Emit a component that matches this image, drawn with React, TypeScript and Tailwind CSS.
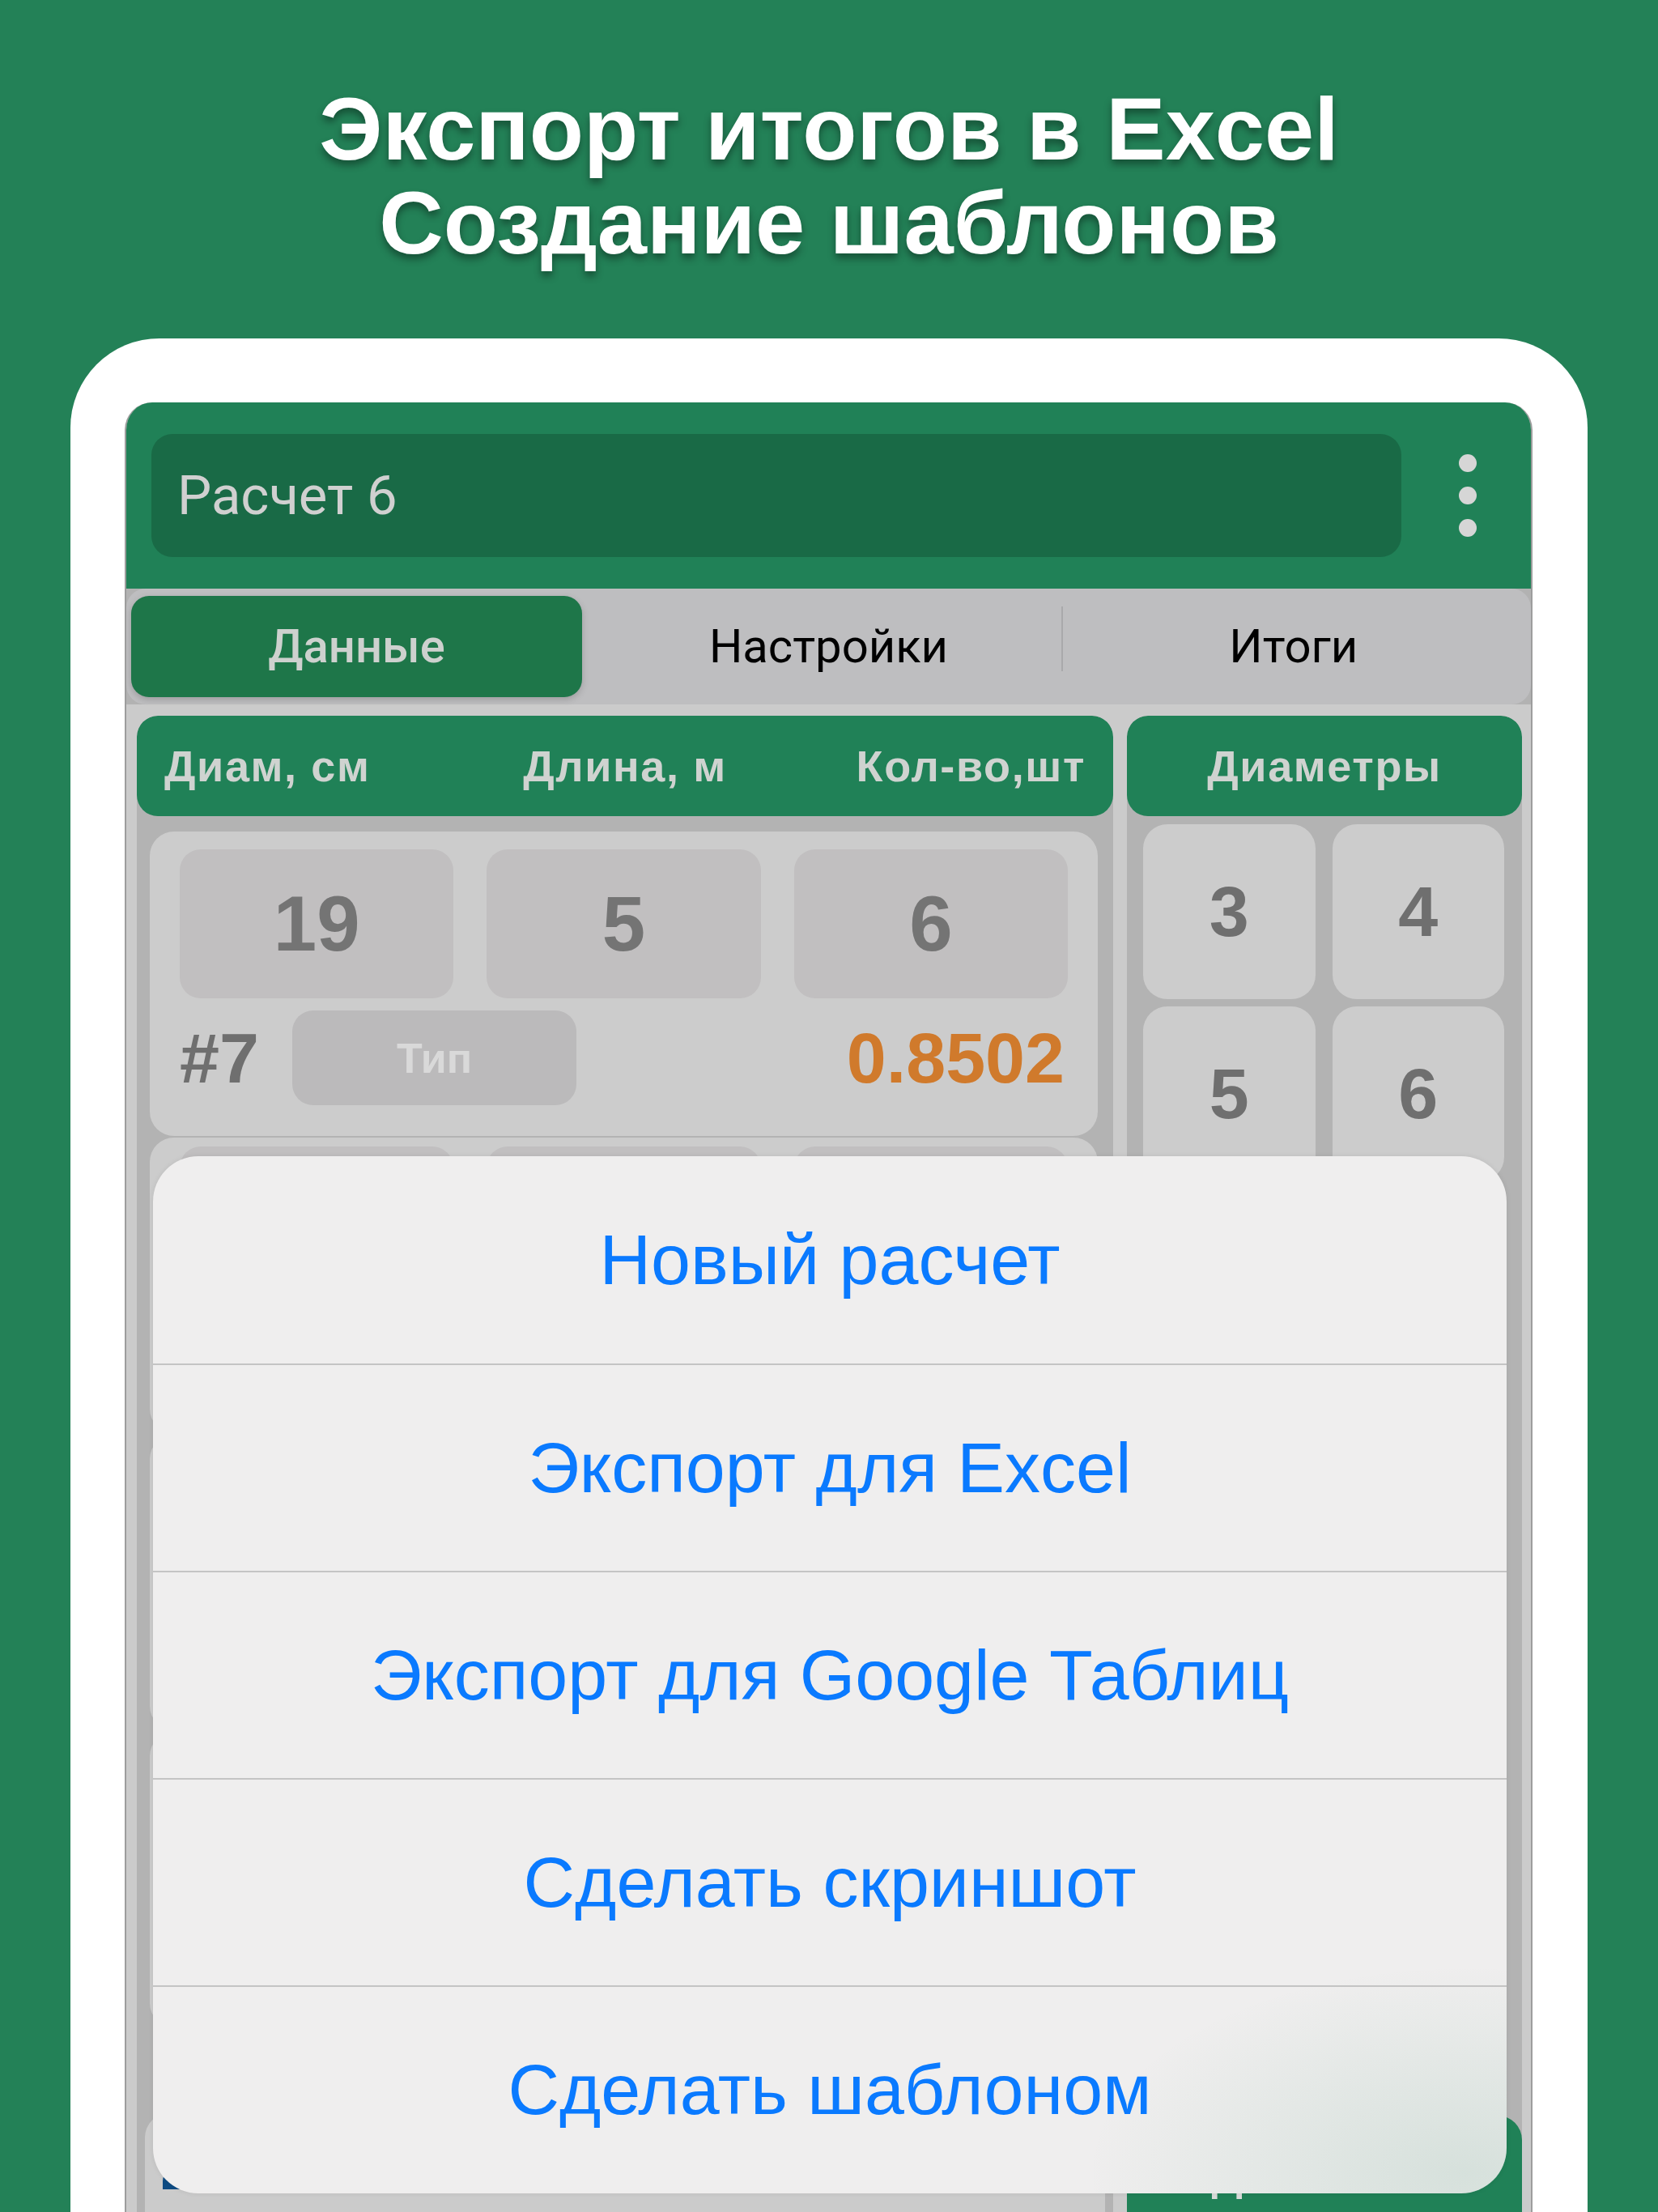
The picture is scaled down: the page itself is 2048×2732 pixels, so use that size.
import React from 'react';

const rows = [
  { d: '19', l: '5', n: '6', idx: '#7', v: '0.8502' },
  { d: '', l: '', n: '', idx: '', v: '' },
  { d: '', l: '', n: '', idx: '', v: '' },
  { d: '', l: '', n: '', idx: '', v: '' },
];

const diameters = ['3', '4', '5', '6', '', '', '', '', '', ''];

const menu = [
  'Новый расчет',
  'Экспорт для Excel',
  'Экспорт для Google Таблиц',
  'Сделать скриншот',
  'Сделать шаблоном',
];

const sans = "font-['Liberation_Sans',Arial,sans-serif]";
const roboto = "font-['Roboto','Liberation_Sans',sans-serif]";

export default function App() {
  return (
    <div className="w-[2048px] h-[2732px] overflow-hidden bg-[#238157] flex flex-col items-center">
      {/* Promo title */}
      <div
        className={`pt-[101px] text-center text-white font-bold text-[110px] leading-[116px] ${sans} [text-shadow:0_6px_10px_rgba(0,0,0,0.38)]`}
      >
        <div>Экспорт итогов в Excel</div>
        <div>Создание шаблонов</div>
      </div>

      {/* Device frame */}
      <div className="mt-[85px] w-[1874px] h-[2314px] bg-white rounded-t-[110px] pt-[79px] pl-[67px] pr-[68px] shrink-0">
        <div className="relative w-[1739px] h-[2235px] border-x-2 border-[#9d9d9d] rounded-t-[34px] overflow-hidden bg-[#cbcbcb] flex flex-col">
          {/* Top bar */}
          <div className="h-[230px] bg-[#208157] flex items-center pl-[31px] shrink-0">
            <div className="w-[1544px] h-[152px] bg-[#196a46] rounded-[26px] flex items-center pl-[32px]">
              <span className={`${roboto} text-[67px] text-[#d0d0d0]`}>Расчет 6</span>
            </div>
            <div className="flex-1 flex flex-col items-center gap-[18px] pl-[4px]">
              <div className="w-[22px] h-[22px] rounded-full bg-[#d6d6d6]" />
              <div className="w-[22px] h-[22px] rounded-full bg-[#d6d6d6]" />
              <div className="w-[22px] h-[22px] rounded-full bg-[#d6d6d6]" />
            </div>
          </div>

          {/* Tabs */}
          <div className="bg-[#b2b2b2] shrink-0">
            <div className="h-[143px] bg-[#bebec0] rounded-[24px] px-[6px] py-[9px] grid grid-cols-3">
              <div className="flex items-stretch">
                <div className="w-[557px] bg-[#1e7649] rounded-[22px] shadow-[0_3px_8px_rgba(0,0,0,0.18)] flex items-center justify-center">
                  <span className={`${roboto} font-medium text-[58px] text-[#cdd1ce]`}>Данные</span>
                </div>
              </div>
              <div className="flex items-center justify-center">
                <span className={`${roboto} text-[58px] text-black`}>Настройки</span>
              </div>
              <div className="relative flex items-center justify-center">
                <div className="absolute left-0 top-[13px] w-[2px] h-[80px] bg-[#a9a9ab]" />
                <span className={`${roboto} text-[58px] text-black`}>Итоги</span>
              </div>
            </div>
          </div>

          {/* Body */}
          <div className="flex-1 min-h-0 pt-[14px] pl-[13px] pr-[11px] flex gap-[17px]">
            {/* Left panel: entries */}
            <div className="w-[1206px] bg-[#b3b3b3] rounded-t-[26px] flex flex-col overflow-hidden">
              <div
                className={`h-[124px] shrink-0 bg-[#208157] rounded-[26px] grid grid-cols-3 items-center px-[34px] ${sans} font-bold text-[54px] tracking-[0.03em] text-[#cfd3d0]`}
              >
                <span className="text-left">Диам, см</span>
                <span className="text-center">Длина, м</span>
                <span className="text-right">Кол-во,шт</span>
              </div>
              <div className="flex-1 min-h-0 overflow-hidden mt-[19px] pl-[16px] pr-[19px] flex flex-col gap-[2px]">
                {rows.map((r, i) => (
                  <div
                    key={i}
                    className={`shrink-0 bg-[#cccccc] rounded-[30px] px-[37px] pb-[38px] ${i === 0 ? 'pt-[22px]' : 'pt-[11px]'}`}
                  >
                    <div className={`grid grid-cols-3 gap-[41px] ${sans} font-bold text-[96px] text-[#747474]`}>
                      {[r.d, r.l, r.n].map((val, j) => (
                        <div key={j} className="h-[184px] bg-[#c1bfc0] rounded-[26px] flex items-center justify-center">
                          {val}
                        </div>
                      ))}
                    </div>
                    <div className={`mt-[15px] h-[117px] flex items-center ${sans} font-bold`}>
                      <span className="w-[139px] text-[88px] text-[#6f6f6f]">{r.idx}</span>
                      <div className="w-[351px] h-[117px] bg-[#bbbabb] rounded-[26px] flex items-center justify-center text-[52px] text-[#d9d9d9]">
                        {i === 0 ? 'Тип' : ''}
                      </div>
                      <span className="ml-auto mr-[4px] text-[88px] text-[#d07a2c]">{r.v}</span>
                    </div>
                  </div>
                ))}
              </div>
              <div className="shrink-0 mx-[10px] h-[122px] bg-[#cbcbcb] rounded-t-[30px] pl-[22px] pt-[70px]">
                <div className="w-[70px] h-[24px] bg-[#0e4b83] rounded-tl-[14px]" />
              </div>
            </div>

            {/* Right panel: diameters */}
            <div className="w-[488px] bg-[#b3b3b3] rounded-t-[26px] flex flex-col overflow-hidden">
              <div
                className={`h-[124px] shrink-0 bg-[#208157] rounded-[26px] flex items-center justify-center ${sans} font-bold text-[54px] tracking-[0.03em] text-[#cfd3d0]`}
              >
                Диаметры
              </div>
              <div className="flex-1 min-h-0 overflow-hidden mt-[10px] pl-[20px] pr-[22px]">
                <div className={`grid grid-cols-2 gap-x-[21px] gap-y-[9px] ${sans} font-bold text-[88px] text-[#6f6f6f]`}>
                  {diameters.map((d, i) => (
                    <div key={i} className="h-[216px] bg-[#cccccc] rounded-[30px] flex items-center justify-center">
                      {d}
                    </div>
                  ))}
                </div>
              </div>
              <div
                className={`shrink-0 h-[119px] bg-[#208157] rounded-t-[30px] pt-[46px] text-center ${sans} font-bold text-[54px] leading-[54px] tracking-[0.04em] text-[#d8dbd9]`}
              >
                Добавить
              </div>
            </div>
          </div>

          {/* Action sheet over the screen */}
          <div className="absolute left-[33px] right-[30px] top-[931px] h-[1281px] bg-[#efeeee] rounded-[56px] overflow-hidden shadow-[0_0_6px_rgba(0,0,0,0.08)]">
            <div className="absolute inset-0 pointer-events-none bg-[radial-gradient(ellipse_28%_20%_at_97%_98%,rgba(34,128,87,0.12),transparent)]" />
            <div className="relative flex flex-col">
              {menu.map((m, i) => (
                <div
                  key={m}
                  className={`h-[256px] flex items-center justify-center ${sans} text-[88px] text-[#0a7aff] ${i > 0 ? 'border-t-2 border-[#c4c4c4]' : ''}`}
                >
                  {m}
                </div>
              ))}
            </div>
          </div>
        </div>
      </div>
    </div>
  );
}
